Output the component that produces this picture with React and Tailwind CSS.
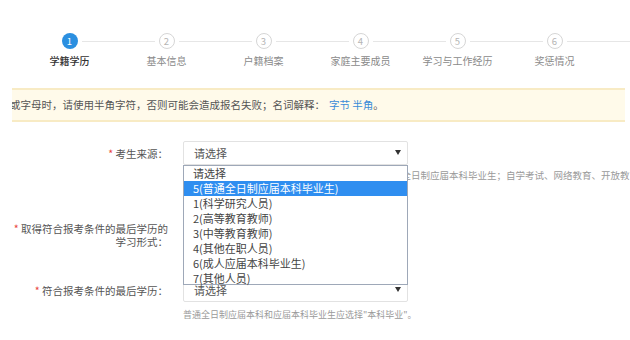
import React from 'react';

const steps = ['学籍学历', '基本信息', '户籍档案', '家庭主要成员', '学习与工作经历', '奖惩情况'];

const options = [
  '请选择',
  '5(普通全日制应届本科毕业生)',
  '1(科学研究人员)',
  '2(高等教育教师)',
  '3(中等教育教师)',
  '4(其他在职人员)',
  '6(成人应届本科毕业生)',
  '7(其他人员)',
];

const Label = ({ children }) => (
  <div className="w-[168px] shrink-0 text-right text-[10.5px] leading-[13px] text-[#555]">
    <span className="text-[#e8453c]">* </span>
    {children}
  </div>
);

const Select = ({ children }) => (
  <div className="relative flex h-[24px] w-[225px] items-center rounded-[2px] border border-[#e2e2e2] bg-white pl-[10px] text-[11px] text-[#555]">
    请选择
    <span className="absolute right-[6px] top-[8px] h-0 w-0 border-x-[3px] border-t-[5px] border-x-transparent border-t-[#333]" />
    {children}
  </div>
);

export default function App() {
  return (
    <div className="h-[340px] w-[630px] overflow-hidden bg-white font-['Noto_Sans_CJK_SC','Noto_Sans',sans-serif]">
      {/* steps */}
      <div className="flex pl-[21px] pt-[33px]">
        {steps.map((s, i) => (
          <div key={s} className="flex w-[97px] flex-col items-center">
            <div className="relative flex h-4 w-4 items-center justify-center">
              <div
                className={
                  i === 0
                    ? 'flex h-4 w-4 items-center justify-center rounded-full bg-[#2b8fe0] text-[9.5px] text-white'
                    : 'flex h-4 w-4 items-center justify-center rounded-full border border-[#d6d6d6] bg-white text-[9.5px] text-[#b5b5b5]'
                }
              >
                {i + 1}
              </div>
              <div className="absolute left-[20px] top-[8px] h-px w-[73px] bg-[#e6e6e6]" />
            </div>
            <div
              className={
                i === 0
                  ? 'mt-[5px] text-[10px] leading-[14px] font-medium text-[#333]'
                  : 'mt-[5px] text-[10px] leading-[14px] text-[#8a8a8a]'
              }
            >
              {s}
            </div>
          </div>
        ))}
      </div>

      {/* notice */}
      <div className="ml-[12px] mt-[20px] flex h-[34px] w-[613px] items-center overflow-hidden border-y-[2px] border-[#f8ebc4] bg-[#fffaea] text-[10.5px] whitespace-nowrap text-[#555]">
        <span className="-ml-[2px]">或字母时，请使用半角字符，否则可能会造成报名失败；名词解释：</span>
        <span className="ml-[4px] text-[#3a8bd8]">字节 半角</span>
        <span>。</span>
      </div>

      {/* form */}
      <div className="mt-[19px]">
        <div className="flex items-start">
          <div className="flex h-[24px] items-center">
            <Label>考生来源：</Label>
          </div>
          <div className="ml-[15px] flex flex-col">
            <Select>
              <div className="absolute left-[-1px] top-[23px] z-10 flex h-[120px] w-[225px] flex-col border border-[#9ea8b8] bg-white">
                {options.map((o, i) => (
                  <div
                    key={o}
                    className={
                      i === 1
                        ? 'h-[15px] bg-[#2f8ef0] pl-[9px] text-[11px] leading-[15px] text-white'
                        : 'h-[15px] pl-[9px] text-[11px] leading-[15px] text-[#444]'
                    }
                  >
                    {o}
                  </div>
                ))}
              </div>
            </Select>
            <div className="mt-[4px] w-[447px] overflow-hidden whitespace-nowrap text-[9.5px] leading-[13px] text-[#9a9a9a]">
              考生来源请按实际情况如实选择，应届生请选择普通全日制应届本科毕业生；自学考试、网络教育、开放教育
            </div>
          </div>
        </div>

        <div className="mt-[40px] flex items-start">
          <Label>
            取得符合报考条件的最后学历的
            <br />
            学习形式：
          </Label>
          <div className="ml-[15px]">
            <Select />
          </div>
        </div>

        <div className="mt-[30px] flex items-start">
          <div className="flex h-[24px] items-center">
            <Label>符合报考条件的最后学历：</Label>
          </div>
          <div className="ml-[15px] flex flex-col">
            <Select />
            <div className="mt-[6px] text-[9px] leading-[13px] whitespace-nowrap text-[#9a9a9a]">
              普通全日制应届本科和应届本科毕业生应选择"本科毕业"。
            </div>
          </div>
        </div>
      </div>
    </div>
  );
}
